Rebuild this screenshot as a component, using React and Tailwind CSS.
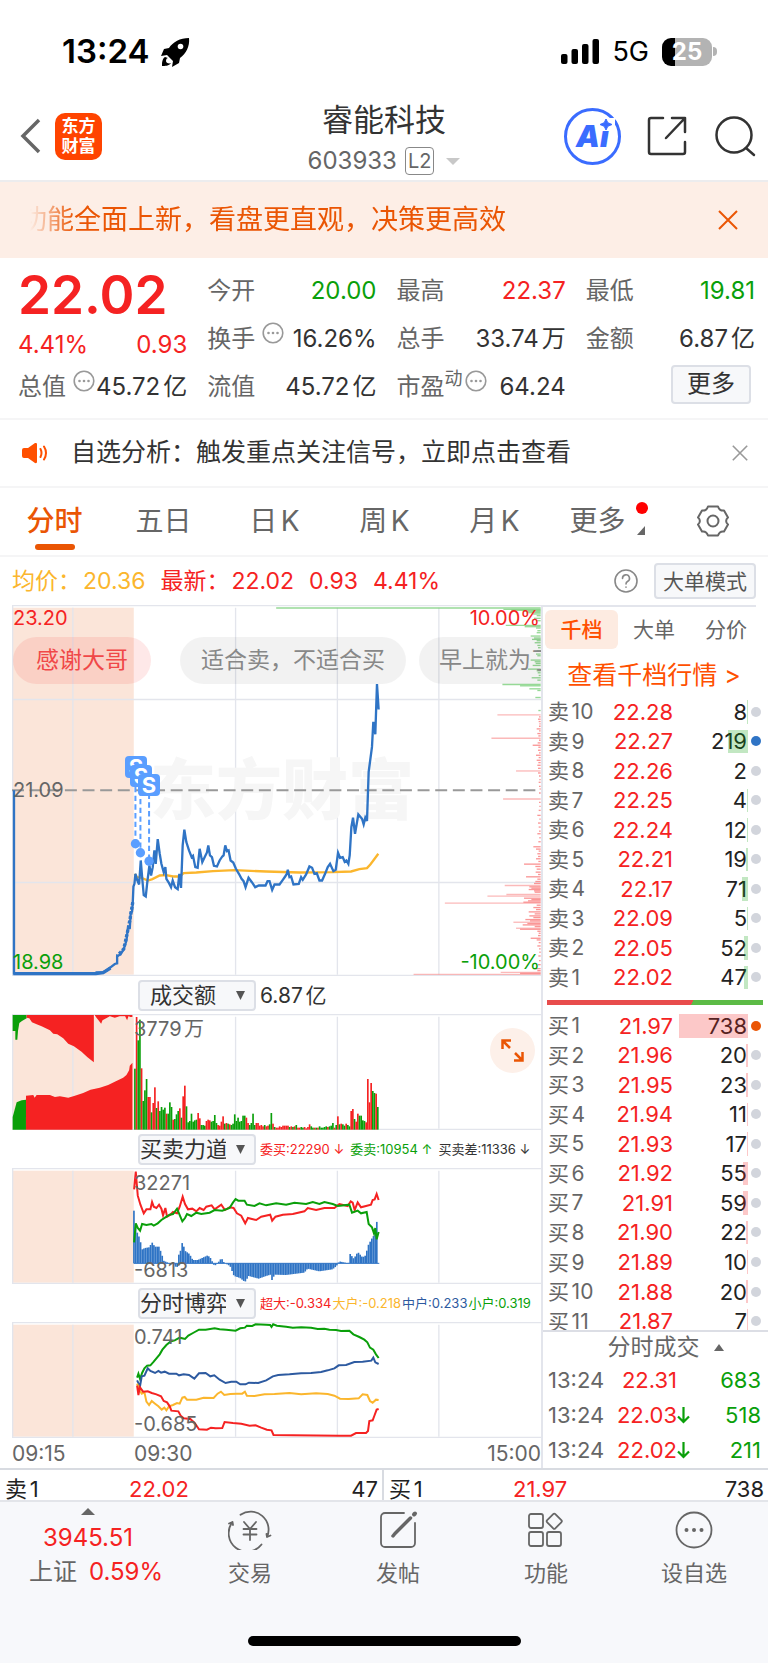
import React from "react";

const RED = "#f52222";
const GREEN = "#0a9f0a";
const BLUE = "#2f74c5";
const AMBER = "#fbb62d";

const PRICE_LINE =
  "42,570 42,1118 285,1118 290,1115 310,1115 322,1108 332,1100 345,1090 352,1088 352,1066 362,1062 372,1045 380,1020 384,985 390,983 393,935 397,932 399,905 401,858 404,850 407,820 412,838 418,852 423,780 428,840 432,884 438,888 443,842 449,795 454,825 459,800 464,750 468,790 474,716 480,760 485,790 492,815 497,800 500,835 508,848 514,860 519,840 526,860 534,866 539,820 544,862 549,735 554,688 560,725 568,750 576,770 580,766 587,800 594,802 600,745 608,785 616,768 622,756 626,735 631,765 637,770 643,796 652,798 660,780 668,768 672,765 677,735 682,752 687,750 693,780 701,786 709,805 718,820 726,835 732,842 738,860 747,832 757,845 767,860 778,855 798,855 804,842 810,842 818,868 825,852 840,852 850,838 857,828 862,820 865,808 870,830 875,828 882,852 898,850 905,830 910,838 920,822 930,798 938,802 945,820 952,818 960,840 968,840 977,820 985,800 992,790 1002,812 1009,808 1016,757 1022,772 1030,770 1036,784 1041,780 1047,790 1051,765 1056,680 1061,652 1067,700 1077,642 1088,655 1093,672 1098,652 1103,662 1108,515 1118,440 1122,365 1128,402 1133,252 1138,328";

const AVG_LINE =
  "405,820 412,830 425,832 445,840 458,836 480,825 500,824 520,828 540,828 552,818 590,816 640,812 705,809 800,813 900,816 1000,815 1055,813 1080,806 1103,803 1113,792 1122,780 1137,760";

// [y, length] measured from the right edge of the plot
const PRESSURE_GREEN = [
  [24, 795], [28, 112], [31, 88], [34, 50], [38, 42], [42, 24], [47, 12], [55, 20], [62, 14], [76, 105], [80, 48], [84, 14],
  [92, 10], [98, 12], [108, 30], [114, 20], [118, 26], [122, 12], [128, 18], [136, 10], [143, 8], [152, 12], [162, 14], [167, 10],
  [180, 30], [185, 18], [190, 15], [196, 24], [207, 38], [212, 12], [218, 9], [226, 6], [233, 27], [240, 10], [253, 115], [257, 62],
  [266, 34], [271, 10], [292, 16], [331, 7],
];

const PRESSURE_RED = [
  [344, 130], [350, 5], [357, 8], [364, 6], [371, 4], [378, 5], [386, 12], [392, 5], [400, 10], [407, 7], [414, 148], [420, 5],
  [428, 9], [435, 24], [441, 7], [450, 8], [458, 5], [465, 14], [472, 6], [480, 12], [487, 7], [495, 10], [504, 8], [512, 74],
  [518, 8], [527, 5], [538, 4], [546, 6], [558, 5], [566, 3], [578, 5], [596, 113], [606, 5], [618, 4], [630, 6], [645, 10],
  [656, 4], [668, 8], [680, 6], [692, 5], [700, 10], [712, 4], [724, 7], [739, 22], [746, 14], [752, 6], [760, 10], [768, 8],
  [775, 14], [783, 7], [791, 50], [798, 16], [806, 12], [815, 15], [822, 8], [829, 44], [836, 10], [843, 16], [849, 20], [855, 108],
  [859, 34], [863, 28], [867, 36], [871, 20], [875, 18], [882, 103], [887, 160], [893, 50], [897, 28], [901, 38], [905, 52], [908, 288],
  [914, 12], [921, 22], [927, 14], [934, 36], [940, 18], [946, 34], [951, 22], [957, 46], [961, 32], [965, 82], [969, 40], [973, 54],
  [978, 18], [983, 74], [986, 62], [992, 10], [998, 6], [1005, 8], [1013, 30], [1018, 12], [1026, 6], [1036, 10], [1045, 5], [1055, 4],
  [1066, 7], [1080, 5], [1092, 8], [1104, 20], [1110, 10], [1115, 120], [1118, 62], [1121, 382],
];

const VOLUME =
  "g183 r338 g268 g330 r184 g86 g118 g152 r98 r98 g52 r80 r127 g65 r85 g56 g68 g60 g66 r48 g48 g82 g68 r30 g32 g46 g56 r64 g36 r100 r132 g70 g22 g26 g48 g24 g28 g30 r50 r34 g14 g14 g12 r26 r30 r28 g24 g26 g44 g20 r14 r12 r24 r40 g18 r20 g18 r16 g14 g18 g46 g26 g36 g24 g26 g42 g42 r36 r20 g14 g20 g48 g14 r20 r20 r12 r14 r10 g14 r10 r12 g16 g50 r18 g8 r6 r6 r10 r8 r12 r12 r12 r12 g8 r10 g8 r10 g14 r6 r6 g8 g6 r8 r4 r8 r16 g10 g6 r6 g6 r6 g10 g6 g6 g8 g10 r8 g10 g12 g20 r6 g14 r40 g16 r18 g16 g12 r18 g14 g10 r56 r62 g32 r24 r48 g42 g42 g28 g26 r22 r152 r82 r140 g116 g110 r108 g68"
    .split(" ")
    .map((s) => ({ up: s[0] === "r", h: Number(s.slice(1)) }));

const FORCE_KEYS = [
  [403, 158], [408, 110], [413, 92], [420, 76], [428, 42], [436, 46], [448, 48], [458, 62], [466, 50], [478, 50], [486, 30],
  [492, 8], [505, 2], [525, -4], [532, -18], [538, 26], [544, 40], [549, 66], [556, 38], [570, 28], [580, 10], [595, 10], [612, 18],
  [625, 24], [635, 14], [642, -4], [650, -6], [666, 16], [674, 2], [692, -8], [704, -38], [722, -44], [737, -56], [748, -38],
  [778, -46], [800, -38], [814, -34], [818, -50], [826, -34], [860, -35], [915, -28], [925, -16], [960, -24], [1000, -18],
  [1012, -8], [1020, 6], [1038, 2], [1047, -4], [1053, 28], [1064, 14], [1076, 34], [1090, 18], [1100, 24], [1106, 52], [1120, 78],
  [1128, 88], [1132, 130], [1138, 96],
];

function forceAt(x) {
  const i = FORCE_KEYS.findIndex((k) => k[0] >= x);
  if (i <= 0) return FORCE_KEYS[0][1];
  const [x0, y0] = FORCE_KEYS[i - 1];
  const [x1, y1] = FORCE_KEYS[i];
  return y0 + ((y1 - y0) * (x - x0)) / (x1 - x0);
}

const FORCE_BARS = Array.from({ length: 147 }, (_, i) => {
  const x = 403 + i * 5;
  return { x, v: forceAt(x) };
});

const SELLS = [
  ["卖10", "22.28", 8, 1], ["卖9", "22.27", 219, 20], ["卖8", "22.26", 2, 0], ["卖7", "22.25", 4, 1], ["卖6", "22.24", 12, 1],
  ["卖5", "22.21", 19, 2], ["卖4", "22.17", 71, 6], ["卖3", "22.09", 5, 1], ["卖2", "22.05", 52, 4], ["卖1", "22.02", 47, 4],
];

const BUYS = [
  ["买1", "21.97", 738, 69], ["买2", "21.96", 20, 2], ["买3", "21.95", 23, 2], ["买4", "21.94", 11, 1], ["买5", "21.93", 17, 1],
  ["买6", "21.92", 55, 5], ["买7", "21.91", 59, 5], ["买8", "21.90", 22, 2], ["买9", "21.89", 10, 1], ["买10", "21.88", 20, 2],
  ["买11", "21.87", 7, 1],
];

const TRADES = [
  ["22.31", false, 683],
  ["22.03", true, 518],
  ["22.02", true, 211],
];

function StatusBar() {
  return (
    <div className="flex h-[97px] items-center justify-between pt-[6px] pr-[51px] pl-[62px] text-black">
      <div className="flex items-center gap-[10px]">
        <span className="text-[33px] leading-none font-semibold">13:24</span>
        <svg width="30" height="30" viewBox="0 0 30 30" aria-hidden="true">
          <path d="M29 1C20 1 13 5 9 11L4 12 1 19l6-1 6 6-1 6 7-4 1-5C26 17 30 9 29 1Z" />
          <path d="M5 20c-3 2-3 6-3 9 3 0 7 0 9-3-2 1-5 0-5-2s1-3 2-3Z" />
          <circle cx="20.500" cy="9.500" r="2.800" fill="#fff" />
        </svg>
      </div>
      <div className="flex items-center">
        <svg width="38" height="25" viewBox="0 0 38 25" aria-hidden="true">
          <rect x="0" y="15" width="6.500" height="10" rx="2" />
          <rect x="10.500" y="10" width="6.500" height="15" rx="2" />
          <rect x="21" y="5" width="6.500" height="20" rx="2" />
          <rect x="31.500" y="0" width="6.500" height="25" rx="2" />
        </svg>
        <span className="ml-[13px] text-[27px] leading-none">5G</span>
        <div className="ml-[13px] flex h-[28px] w-[50px] items-center justify-center rounded-[9px] bg-[linear-gradient(90deg,#000_26%,#b3b3b3_26%)] text-[24px] leading-none font-bold text-white">
          25
        </div>
        <span className="ml-px h-[9px] w-[4px] rounded-r-full bg-[#b3b3b3]" />
      </div>
    </div>
  );
}

function Header() {
  return (
    <header className="relative flex h-[85px] items-center justify-between border-b-2 border-[#ececee] pr-3 pb-[5px] pl-5">
      <div className="flex items-center gap-[14px]">
        <button aria-label="返回">
          <svg width="21" height="36" viewBox="0 0 21 36" fill="none" stroke="#666" strokeWidth="3.500" aria-hidden="true">
            <path d="M19 2 3 18l16 16" />
          </svg>
        </button>
        <a href="#home" className="flex h-[47px] w-[47px] flex-col items-center justify-center rounded-[10px] bg-[#ff4400] text-[17px] leading-[20px] font-bold text-white">
          <span>东方</span>
          <span>财富</span>
        </a>
      </div>

      <div className="absolute inset-x-0 top-0 mx-auto flex w-[220px] flex-col items-center pt-[3px]">
        <h1 className="text-[31px] leading-[40px] text-[#333]">睿能科技</h1>
        <button className="flex items-center text-[24px] leading-[42px] text-[#666]">
          603933
          <span className="ml-[8px] rounded-[4px] border border-[#888] px-[2px] text-[20px] leading-[26px]">L2</span>
          <svg className="ml-[12px]" width="14" height="7" viewBox="0 0 14 7" aria-hidden="true">
            <path d="M0 0h14L7 7Z" fill="#c8c8c8" />
          </svg>
        </button>
      </div>

      <div className="flex items-center">
        <button aria-label="Ai" className="flex h-[57px] w-[57px] items-center justify-center rounded-full border-[3px] border-[#3a6cff] text-[30px] leading-none font-black text-[#3a6cff]">
          <span className="italic">A</span>
          <span className="relative italic">
            i
            <svg className="absolute -top-[3px] -left-[1px]" width="16" height="13" viewBox="0 0 16 13" aria-hidden="true">
              <rect width="16" height="13" fill="#fff" />
              <path d="M7 1 8.800 4.700 13 6.500 8.800 8.300 7 12 5.200 8.300 1 6.500 5.200 4.700Z" fill="#3a6cff" stroke="#3a6cff" />
            </svg>
          </span>
        </button>
        <button aria-label="分享" className="ml-[26px]">
          <svg width="40" height="40" viewBox="0 0 40 40" fill="none" stroke="#333" strokeWidth="2.500" strokeLinecap="round" strokeLinejoin="round" aria-hidden="true">
            <path d="M16 2H4a2 2 0 0 0-2 2v32a2 2 0 0 0 2 2h32a2 2 0 0 0 2-2V26M25 2h13v14M38 2 19 22" />
          </svg>
        </button>
        <button aria-label="搜索" className="ml-[28px]">
          <svg width="41" height="42" viewBox="0 0 41 42" fill="none" stroke="#333" strokeWidth="2.500" strokeLinecap="round" aria-hidden="true">
            <circle cx="19" cy="20" r="17.500" />
            <path d="m31 33 8 7" />
          </svg>
        </button>
      </div>
    </header>
  );
}

function Close({ size, className }) {
  return (
    <svg className={className} width={size} height={size} viewBox="0 0 20 20" fill="none" stroke="currentColor" strokeWidth="2" aria-hidden="true">
      <path d="M1 1 19 19M19 1 1 19" />
    </svg>
  );
}

function Dots() {
  return (
    <svg className="relative -top-[6px] shrink-0" width="22" height="22" viewBox="0 0 22 22" fill="#999" aria-hidden="true">
      <circle cx="11" cy="11" r="9.800" fill="none" stroke="#999" strokeWidth="1.600" />
      <circle cx="6.500" cy="11" r="1.300" />
      <circle cx="11" cy="11" r="1.300" />
      <circle cx="15.500" cy="11" r="1.300" />
    </svg>
  );
}

function Stat({ label, value, color = "text-[#333]", dots, sup }) {
  return (
    <div className="flex items-center justify-between whitespace-nowrap">
      <span className="flex items-center text-[#666]">
        {label}
        {sup && <span className="relative -top-[8px] text-[18px]">{sup}</span>}
        {dots && (
          <span className={sup ? "ml-[2px]" : "ml-[7px]"}>
            <Dots />
          </span>
        )}
      </span>
      <span className={color}>{value}</span>
    </div>
  );
}

function Quote() {
  return (
    <section className="grid auto-rows-[48px] grid-cols-4 gap-x-5 border-b-2 border-[#f5f5f6] pt-[9px] pr-[13px] pb-[7px] pl-[18px] text-[24px] leading-none">
      <div className="flex items-center pt-2 text-[53px] font-semibold text-[#f52222]">22.02</div>
      <Stat label="今开" value="20.00" color="text-[#0a9f0a]" />
      <Stat label="最高" value="22.37" color="text-[#f52222]" />
      <Stat label="最低" value="19.81" color="text-[#0a9f0a]" />
      <div className="flex items-center justify-between pt-3 text-[#f52222]">
        <span>4.41%</span>
        <span>0.93</span>
      </div>
      <Stat label="换手" value="16.26%" dots />
      <Stat label="总手" value="33.74万" />
      <Stat label="金额" value="6.87亿" />
      <Stat label="总值" value="45.72亿" dots />
      <Stat label="流值" value="45.72亿" />
      <Stat label="市盈" value="64.24" sup="动" dots />
      <div className="flex items-center justify-end pr-1 pb-[6px]">
        <button className="h-[39px] w-[80px] rounded-[4px] border-2 border-[#dcdfe6] bg-[#f7f8fa] text-[#333]">更多</button>
      </div>
    </section>
  );
}

function Tabs() {
  const tab = "relative flex h-full items-center justify-center pb-px text-[28px] text-[#666]";
  return (
    <nav className="grid h-[69px] grid-cols-[109px_109px_113px_107px_113px_1fr_110px] border-b-2 border-[#f5f5f6]">
      <button className={tab}>
        <span className="font-medium text-[#ea5504]">分时</span>
        <span className="absolute bottom-[5px] h-[6px] w-[40px] rounded-full bg-[#ea5504]" />
      </button>
      <button className={tab}>五日</button>
      <button className={tab}>日K</button>
      <button className={tab}>周K</button>
      <button className={tab}>月K</button>
      <button className={tab}>
        <span className="pr-[14px]">更多</span>
        <span className="absolute top-[14px] right-[10px] h-[12px] w-[12px] rounded-full bg-[#ff0000]" />
        <svg className="absolute right-[13px] bottom-[20px]" width="8" height="9" viewBox="0 0 8 9" aria-hidden="true">
          <path d="M8 0v9H0Z" fill="#666" />
        </svg>
      </button>
      <button className={tab} aria-label="设置">
        <svg width="32" height="32" viewBox="0 0 32 32" fill="none" stroke="#666" strokeWidth="2" strokeLinejoin="round" aria-hidden="true">
          <path d="M11 1.500h10c1 3 3 4.500 6 4l4 7c-2.500 2-2.500 5 0 7l-4 7c-3-.5-5 1-6 4H11c-1-3-3-4.500-6-4l-4-7c2.500-2 2.500-5 0-7l4-7c3 .5 5-1 6-4Z" />
          <circle cx="16" cy="16" r="5.500" />
        </svg>
      </button>
    </nav>
  );
}

function InfoRow() {
  return (
    <div className="flex h-[48px] items-center pr-3 pl-3 text-[23px] leading-none">
      <span className="flex gap-[2px] text-[#fbb62d]"><span>均价：</span><span>20.36</span></span>
      <span className="ml-[15px] flex gap-[2px] text-[#f52222]"><span>最新：</span><span>22.02</span></span>
      <span className="ml-[15px] text-[#f52222]">0.93</span>
      <span className="ml-[15px] text-[#f52222]">4.41%</span>
      <button aria-label="帮助" className="mr-4 ml-auto">
        <svg width="24" height="24" viewBox="0 0 24 24" fill="none" stroke="#888" strokeWidth="1.600" strokeLinecap="round" aria-hidden="true">
          <circle cx="12" cy="12" r="11" />
          <path d="M8.500 9.500a3.500 3.500 0 1 1 5 3c-1 .6-1.500 1-1.500 2.500M12 18v.3" />
        </svg>
      </button>
      <button className="h-[36px] w-[102px] rounded-[4px] border-2 border-[#dcdfe6] bg-[#f7f8fa] text-[21px] text-[#555]">大单模式</button>
    </div>
  );
}

// Every plot shares the x range 36..1626, so times line up between the stacked charts
function Plot({ top, height, className, children }) {
  return (
    <svg className={className} viewBox={`36 ${top} 1590 ${height}`} preserveAspectRatio="none" aria-hidden="true">
      <rect x="38" y={top + 8} width="364" height={height - 12} fill="#fbe5d9" />
      <g stroke="#e3e5ec" strokeWidth="4">
        <path d={`M219 ${top + 8}V${top + height - 4}M708 ${top + 8}V${top + height - 4}M1014 ${top + 8}V${top + height - 4}M1319 ${top + 8}V${top + height - 4}`} />
        <path d={`M36 ${top + 2}H1626M36 ${top + height - 2}H1626M38 ${top}V${top + height}`} />
      </g>
      {children}
    </svg>
  );
}

function PriceChart() {
  const label = "absolute leading-none text-[20px]";
  const badge = "absolute flex h-[22px] w-[22px] items-center justify-center rounded-[4px] bg-[#5a9eff] text-[22px] leading-none font-bold text-white";
  const bubble = "flex h-[47px] shrink-0 items-center rounded-full text-[23px]";
  return (
    <div className="relative overflow-hidden">
      <Plot top={15} height={1111} className="h-[371px] w-full">
        <path d="M36 298H1626M36 846H1626" stroke="#e3e5ec" strokeWidth="4" />
      </Plot>
      <span className="absolute top-[145px] left-[138px] text-[66px] leading-[80px] font-black text-[#f6f6f6]">东方财富</span>
      <svg className="absolute inset-0 h-[371px] w-full" viewBox="36 15 1590 1111" preserveAspectRatio="none" fill="none" aria-hidden="true">
        <path d="M36 570H1626" stroke="#999" strokeWidth="6" strokeDasharray="36 17" />
        <g stroke="#7ccf7c" strokeWidth="4">
          {PRESSURE_GREEN.map(([y, len]) => (
            <path key={y} d={`M1625 ${y}h-${len}`} opacity=".8" />
          ))}
        </g>
        <g stroke="#f98b8b" strokeWidth="4">
          {PRESSURE_RED.map(([y, len]) => (
            <path key={y} d={`M1625 ${y}h-${len}`} opacity={len > 70 ? 0.6 : 0.9} />
          ))}
        </g>
        <polyline points={AVG_LINE} stroke={AMBER} strokeWidth="7" />
        <polyline points={PRICE_LINE} stroke={BLUE} strokeWidth="7" />
        <path d="M40 1119H288L310 1116 332 1102" stroke={BLUE} strokeWidth="10" />
        <path d="M399 905 390 960 384 990 372 1045 352 1066" stroke={BLUE} strokeWidth="10" strokeDasharray="9 5" />
        <path d="M407 560V730M422 570V757M448 580V782" stroke="#5a9eff" strokeWidth="6" strokeDasharray="16 10" />
        <g fill="#5a9eff">
          <circle cx="407" cy="730" r="14" />
          <circle cx="422" cy="757" r="14" />
          <circle cx="448" cy="782" r="14" />
        </g>
      </svg>

      <span className={`${label} top-[3px] left-[1px] text-[#f52222]`}>23.20</span>
      <span className={`${label} top-[175px] left-[1px] text-[#666]`}>21.09</span>
      <span className={`${label} bottom-[4px] left-[1px] text-[#0a9f0a]`}>18.98</span>
      <span className={`${label} top-[3px] right-[1px] text-[#f52222]`}>10.00%</span>
      <span className={`${label} right-[1px] bottom-[4px] text-[#0a9f0a]`}>-10.00%</span>

      <span className={`${badge} top-[151px] left-[113px]`}>S</span>
      <span className={`${badge} top-[160px] left-[118px]`}>S</span>
      <span className={`${badge} top-[169px] left-[126px]`}>S</span>

      <div className="absolute inset-x-0 top-[32px] flex overflow-hidden">
        <span className={`${bubble} ml-[1px] bg-[#f52222]/10 px-[23px] text-[#f04848]`}>感谢大哥</span>
        <span className={`${bubble} ml-[29px] bg-black/5 px-[21px] text-[#888]`}>适合卖，不适合买</span>
        <span className={`${bubble} ml-[13px] bg-black/5 px-5 text-[#888]`}>早上就为了</span>
      </div>
    </div>
  );
}

function IndicatorRow({ id, name, children }) {
  return (
    <div className="flex h-[38px] items-center pl-[126px] whitespace-nowrap">
      <div className="relative shrink-0">
        <select
          id={id}
          aria-label={name}
          className="block h-[31px] w-[118px] appearance-none rounded-[4px] border-2 border-[#dcdfe6] bg-[#f7f8fa] pr-[28px] text-center text-[22px] leading-none text-[#333]"
        >
          <option>{name}</option>
        </select>
        <svg className="pointer-events-none absolute top-[11px] right-[11px]" width="9" height="9" viewBox="0 0 9 9" aria-hidden="true">
          <path d="M0 0h9L4.500 9Z" fill="#555" />
        </svg>
      </div>
      <div className="ml-1 flex items-center leading-none">{children}</div>
    </div>
  );
}

function VolumeChart() {
  return (
    <div className="relative">
      <Plot top={131} height={348} className="h-[116px] w-full">
        <path d="M38 134H80V144L66 152 58 158 54 182 52 208H46V182H38Z" fill={GREEN} />
        <path d="M80 134H282V276L262 260 245 244 222 228 205 220 190 204 172 192 160 190 150 180 125 168 110 162 96 156 88 144 80 142Z" fill={RED} />
        <path d="M284 134H398V140H392L386 138 382 150 376 138 360 138 345 142 330 138 315 146 308 150 304 160 296 150 290 142Z" fill={RED} />
        <path d="M38 478V440L50 396 65 390 78 388V478Z" fill={GREEN} />
        <path d="M78 478V376L100 374 104 382 110 374H150L165 380 180 378 205 382 225 376 250 368 272 358 300 352 325 344 345 334 370 322 380 314 388 300 390 286 398 277V478Z" fill={RED} />
        {VOLUME.map((bar, i) => (
          <rect key={i} x={403 + i * 5} y={478 - bar.h} width="5" height={bar.h} fill={bar.up ? RED : GREEN} />
        ))}
      </Plot>
      <span className="absolute top-[3px] left-[122px] text-[20px] leading-[24px] text-[#666]">3779万</span>
      <button aria-label="全屏" className="absolute top-[14px] right-[6px] flex h-[45px] w-[45px] items-center justify-center rounded-full bg-[#fdf0e9]">
        <svg width="23" height="23" viewBox="0 0 23 23" fill="none" stroke="#ea5504" strokeWidth="2.500" aria-hidden="true">
          <path d="M1.500 10V1.500H10M2 2l7 7M13 21.500h8.500V13M21 21l-7-7" />
        </svg>
      </button>
    </div>
  );
}

function ForceChart() {
  return (
    <div className="relative">
      <Plot top={592} height={348} className="h-[116px] w-full">
        <path d="M402 878H1140" stroke={BLUE} strokeWidth="3" />
        {FORCE_BARS.map(({ x, v }) => (
          <rect key={x} x={x - 3} y={v > 0 ? 878 - v : 878} width="5" height={Math.abs(v)} fill={BLUE} />
        ))}
        <polyline
          fill="none"
          stroke={RED}
          strokeWidth="6"
          points="403,656 408,603 414,675 422,702 432,728 440,716 452,716 457,694 462,708 470,712 478,702 485,714 490,734 497,712 502,738 512,732 520,724 532,728 540,708 549,678 556,700 565,716 578,714 590,722 600,712 612,718 620,708 636,704 645,716 665,702 676,718 690,710 702,712 712,728 725,735 737,758 745,742 770,748 785,738 812,732 818,750 828,738 850,732 880,730 915,722 925,712 950,718 975,712 1005,712 1020,700 1045,706 1054,692 1060,696 1066,718 1075,695 1085,710 1100,706 1115,702 1120,688 1126,686 1132,670 1138,688"
        />
        <polyline
          fill="none"
          stroke={GREEN}
          strokeWidth="6"
          points="403,815 408,758 414,772 421,780 427,760 440,763 455,760 462,765 474,758 485,748 497,740 510,732 520,730 532,714 542,738 548,752 556,742 562,730 575,736 590,726 605,730 630,726 645,718 668,720 690,712 700,696 708,685 716,690 735,690 742,702 765,706 780,698 800,704 830,698 860,702 885,696 920,700 940,694 960,700 975,694 1000,700 1015,706 1050,702 1058,726 1075,720 1085,728 1102,724 1108,760 1118,770 1124,788 1128,772 1132,806 1138,784"
        />
      </Plot>
      <span className="absolute top-[3px] left-[122px] text-[20px] leading-[24px] text-[#666]">32271</span>
      <span className="absolute bottom-[2px] left-[122px] text-[20px] leading-[24px] text-[#666]">-6813</span>
    </div>
  );
}

function GameChart() {
  return (
    <div className="relative">
      <Plot top={337} height={348} className="h-[116px] w-full">
        <g fill="none" strokeWidth="6">
          <polyline stroke={GREEN} points="412,504 416,492 421,508 427,490 434,476 442,468 452,467 462,456 470,446 480,434 488,420 500,406 512,396 525,392 540,384 556,388 566,378 580,370 598,360 618,360 645,356 660,359 680,360 708,363 722,356 736,354 742,348 758,349 768,344 800,345 812,346 816,352 821,344 832,348 860,351 880,354 905,353 935,354 955,358 975,357 990,360 1010,361 1025,364 1050,363 1062,374 1080,382 1095,390 1104,398 1112,414 1122,420 1130,434 1138,445" />
          <polyline stroke="#2d5aa0" points="412,512 416,520 420,534 426,500 434,498 444,476 452,484 466,490 476,484 484,489 495,486 508,492 530,492 538,497 552,494 568,496 584,507 598,491 618,490 632,500 644,497 660,510 678,520 695,516 710,516 722,524 738,524 748,519 776,520 800,512 820,500 836,496 870,494 905,491 935,490 965,487 985,482 1005,476 1018,467 1040,466 1065,457 1090,456 1116,453 1122,444 1128,458 1138,463" />
          <polyline stroke={AMBER} points="412,522 418,540 426,552 434,548 440,576 448,586 456,574 466,582 476,590 486,600 494,594 500,602 508,590 520,586 532,580 540,582 548,564 555,562 562,570 590,570 612,564 642,565 654,552 664,546 674,556 692,553 712,552 728,552 736,546 742,558 765,559 795,554 825,553 870,550 905,554 950,551 985,553 1005,558 1022,567 1048,568 1078,566 1090,554 1104,556 1112,574 1120,579 1130,570 1138,571" />
          <polyline stroke={RED} points="412,528 416,556 420,532 430,546 444,545 456,550 470,554 484,560 492,574 502,578 510,590 515,603 536,605 543,618 552,626 572,628 585,640 598,659 622,660 634,654 648,656 668,655 675,637 700,640 725,642 750,648 768,647 785,654 802,660 816,662 822,676 880,677 1020,678 1055,678 1070,670 1100,670 1106,664 1110,634 1120,632 1126,616 1132,600 1138,598" />
        </g>
      </Plot>
      <span className="absolute top-[3px] left-[122px] text-[20px] leading-[24px] text-[#666]">0.741</span>
      <span className="absolute bottom-[2px] left-[122px] text-[20px] leading-[24px] text-[#666]">-0.685</span>
    </div>
  );
}

function BookTable({ rows, side, className }) {
  const bar = side === "sell" ? "bg-[#0a9f0a]/25" : "bg-[#f52222]/25";
  const strong = side === "sell" ? "bg-[#2f74c5]" : "bg-[#ea5504]";
  return (
    <table className={`w-full table-fixed text-[22px] leading-none ${className}`}>
      <tbody>
        {rows.map(([label, price, qty, width]) => (
          <tr key={label}>
            <th scope="row" className="w-[56px] p-0 pl-[5px] text-left text-[21px] font-normal whitespace-nowrap text-[#666]">{label}</th>
            <td className="w-[74px] p-0 text-right text-[#f52222]">{price}</td>
            <td className="relative p-0 pr-px text-right text-[#222]">
              {qty}
              <span className={`absolute inset-y-[3px] right-0 ${bar}`} style={{ width }} />
            </td>
            <td className="w-[20px] p-0">
              <span className={`ml-[3px] block h-[10px] w-[10px] rounded-full ${qty > 200 ? strong : "bg-[#d2d5dc]"}`} />
            </td>
          </tr>
        ))}
      </tbody>
    </table>
  );
}

function OrderBook() {
  return (
    <aside className="flex w-[227px] shrink-0 flex-col border-l-2 border-[#e3e5ec]">
      <div className="mr-3 flex border-t-2 border-[#e3e5ec] pt-[3px] pl-[2px] text-[21px] text-[#666]">
        <button className="h-[39px] w-[73px] shrink-0 rounded-[6px] bg-[#fdebe1] font-medium text-[#ff5000]">千档</button>
        <button className="h-[39px] w-[72px] shrink-0">大单</button>
        <button className="h-[39px] w-[72px] shrink-0">分价</button>
      </div>
      <a href="#depth" className="flex h-[48px] items-center justify-center pt-[5px] pr-[3px] text-[25px] leading-none text-[#ff5000]">查看千档行情 &gt;</a>
      <BookTable rows={SELLS} side="sell" className="h-[295px]" />
      <div className="mt-[8px] mr-[5px] mb-[6px] ml-1 h-[5px] bg-[linear-gradient(120deg,#e84c4c_67%,#5cbb46_67%)]" />
      <div className="h-[319px] overflow-hidden">
        <BookTable rows={BUYS} side="buy" className="h-[325px]" />
      </div>
      <button className="flex h-[32px] items-center justify-center border-t-2 border-[#dcdee5] pl-[20px] text-[23px] leading-none text-[#666]">
        分时成交
        <svg className="ml-[14px]" width="10" height="7" viewBox="0 0 10 7" aria-hidden="true">
          <path d="M5 0 10 7H0Z" fill="#666" />
        </svg>
      </button>
      <table className="w-full table-fixed text-[22px] leading-none">
        <tbody>
          {TRADES.map(([price, down, qty]) => (
            <tr key={qty} className="h-[35px]">
              <td className="w-[64px] p-0 pl-[5px] text-[#666]">13:24</td>
              <td className="w-[70px] p-0 text-right text-[#f52222]">{price}</td>
              <td className="w-[18px] p-0">
                {down && (
                  <svg width="13" height="18" viewBox="0 0 13 18" fill="none" stroke={GREEN} strokeWidth="2.200" aria-label="下跌">
                    <path d="M6.500 1v15M1 10.500l5.500 5.500 5.500-5.500" />
                  </svg>
                )}
              </td>
              <td className="p-0 pr-[7px] text-right text-[#0a9f0a]">{qty}</td>
            </tr>
          ))}
        </tbody>
      </table>
    </aside>
  );
}

function BottomNav() {
  const item = "flex flex-col items-center text-[22px] leading-none text-[#666]";
  const icon = { width: 44, height: 40, viewBox: "0 0 44 40", fill: "none", stroke: "#666", strokeWidth: 1.8, strokeLinecap: "round", strokeLinejoin: "round", "aria-hidden": true };
  return (
    <footer className="border-t-2 border-[#e3e5ea] bg-[#f7f8fb]">
      <nav className="grid h-[134px] grid-cols-[176px_1fr_1fr_1fr_1fr]">
        <button className="flex flex-col items-center pt-[6px] text-[24px] leading-none text-[#f52222]">
          <svg width="14" height="7" viewBox="0 0 14 7" aria-hidden="true">
            <path d="M7 0l7 7H0Z" fill="#666" />
          </svg>
          <span className="mt-[11px]">3945.51</span>
          <span className="mt-[10px] flex gap-3 pl-4">
            <span className="text-[#666]">上证</span>
            <span>0.59%</span>
          </span>
        </button>
        <a href="#trade" className={`${item} pt-[8px]`}>
          <svg {...icon}>
            <path d="M12.500 4.700A18 18 0 0 1 39 27l3.500-1.500M39 27l-.5-3" />
            <path d="M33.500 34.500A18 18 0 0 1 4.500 12L1 13.500M4.500 12l.5 3" />
            <path d="M16 12l6 7 6-7M22 19v11M15.500 19h13M15.500 24.500h13" />
          </svg>
          <span className="mt-[12px]">交易</span>
        </a>
        <a href="#post" className={`${item} pt-[8px]`}>
          <svg {...icon}>
            <path d="M28 3H9a4 4 0 0 0-4 4v26a4 4 0 0 0 4 4h26a4 4 0 0 0 4-4V13" />
            <path d="M34.500 8 19 23.500l-2 2.500" strokeWidth="3.500" />
            <path d="M38 4.500l1-1" strokeWidth="4" />
          </svg>
          <span className="mt-[12px]">发帖</span>
        </a>
        <a href="#features" className={`${item} pt-[8px]`}>
          <svg {...icon}>
            <rect x="5" y="4" width="14" height="14" rx="2" />
            <rect x="5" y="22" width="14" height="14" rx="2" />
            <rect x="23" y="22" width="14" height="14" rx="2" />
            <rect x="24.500" y="5.500" width="11.500" height="11.500" rx="1.500" transform="rotate(45 30.250 11.250)" />
          </svg>
          <span className="mt-[12px]">功能</span>
        </a>
        <a href="#watch" className={`${item} pt-[8px]`}>
          <svg {...icon}>
            <circle cx="22" cy="20" r="17.500" />
            <path d="M14.500 20h.01M22 20h.01M29.500 20h.01" strokeWidth="4" />
          </svg>
          <span className="mt-[12px]">设自选</span>
        </a>
      </nav>
      <div className="pb-[17px]">
        <div className="mx-auto h-[10px] w-[273px] rounded-full bg-black" />
      </div>
    </footer>
  );
}

export default function App() {
  return (
    <div className="min-h-screen overflow-hidden bg-white font-['Inter','Noto_Sans_CJK_SC',sans-serif] [text-autospace:normal]">
      <StatusBar />
      <Header />

      <div className="flex h-[76px] items-center justify-between bg-[#fdeee6] pr-[30px] pl-[30px] text-[#ea5504]">
        <p className="flex overflow-hidden text-[27px] whitespace-nowrap [mask-image:linear-gradient(90deg,transparent,#000_44px)]">
          <span className="-ml-[10px]">功能全面上新，看盘更直观，决策更高效</span>
        </p>
        <button aria-label="关闭">
          <Close size={20} />
        </button>
      </div>

      <Quote />

      <div className="flex h-[68px] items-center border-b-2 border-[#f5f5f6] pr-[20px] pl-[22px]">
        <svg width="26" height="22" viewBox="0 0 26 22" fill="none" stroke="#ff5000" strokeWidth="2" strokeLinecap="round" aria-hidden="true">
          <path d="M2 6h4l7-5q2-.5 2 1v18q0 1.500-2 1l-7-5H2Q0 16 0 14V8q0-2 2-2Z" fill="#ff5000" stroke="none" />
          <path d="M18.500 7q2 4 0 8M22 4.500q4 6.500 0 13" />
        </svg>
        <a href="#signal" className="ml-[23px] text-[25px] text-[#333]">自选分析：触发重点关注信号，立即点击查看</a>
        <button aria-label="关闭提示" className="ml-auto text-[#999]">
          <Close size={16} />
        </button>
      </div>

      <Tabs />
      <InfoRow />

      <main className="flex pl-3">
        <div className="min-w-0 flex-1">
          <PriceChart />
          <IndicatorRow id="volume" name="成交额">
            <span className="text-[21px] text-[#333]">6.87亿</span>
          </IndicatorRow>
          <VolumeChart />
          <IndicatorRow id="force" name="买卖力道">
            <span className="flex gap-[6px] text-[13px] text-[#333]">
              <span className="text-[#f52222]">委买:22290 ↓</span>
              <span className="text-[#0a9f0a]">委卖:10954 ↑</span>
              <span>买卖差:11336 ↓</span>
            </span>
          </IndicatorRow>
          <ForceChart />
          <IndicatorRow id="game" name="分时博弈">
            <span className="flex gap-px text-[13px]">
              <span className="text-[#f52222]">超大:-0.334</span>
              <span className="text-[#fbb62d]">大户:-0.218</span>
              <span className="text-[#2d5aa0]">中户:0.233</span>
              <span className="text-[#0a9f0a]">小户:0.319</span>
            </span>
          </IndicatorRow>
          <GameChart />
          <div className="flex h-[30px] items-center text-[21px] leading-none text-[#666]">
            <span className="w-[122px]">09:15</span>
            <span>09:30</span>
            <span className="ml-auto">15:00</span>
          </div>
        </div>
        <OrderBook />
      </main>

      <div className="grid h-[32px] grid-cols-2 overflow-hidden border-t-2 border-[#d8dbe1] text-[22px] leading-[38px] text-[#222]">
        <div className="flex border-r-2 border-[#d8dbe1] pr-1 pl-[5px]">
          <span className="w-[124px]">卖1</span>
          <span className="text-[#f52222]">22.02</span>
          <span className="ml-auto">47</span>
        </div>
        <div className="flex pr-1 pl-[5px]">
          <span className="w-[124px]">买1</span>
          <span className="text-[#f52222]">21.97</span>
          <span className="ml-auto">738</span>
        </div>
      </div>

      <BottomNav />
    </div>
  );
}
